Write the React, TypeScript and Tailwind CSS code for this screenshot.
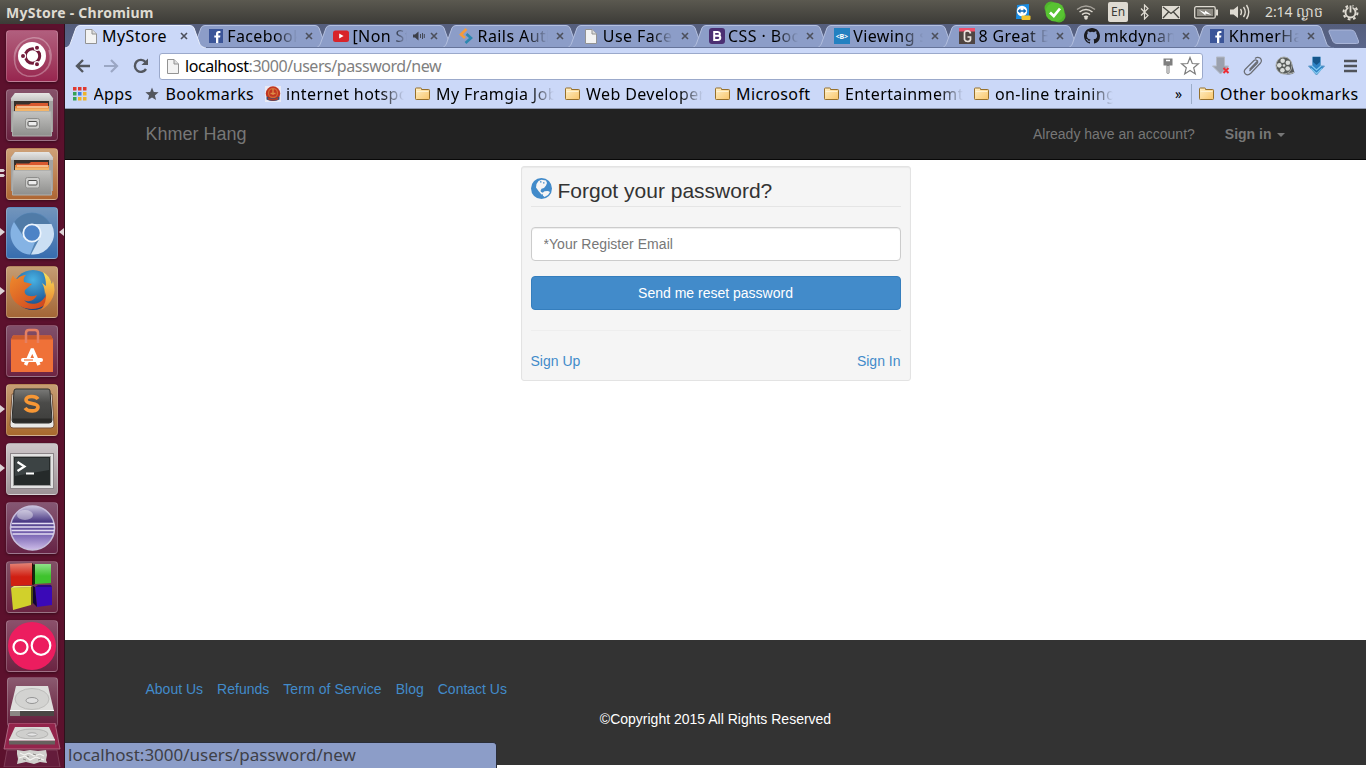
import React from "react";

const UI = "font-['Noto_Sans',sans-serif]";
const FADE = "[mask-image:linear-gradient(to_right,#000_68%,transparent)]";

/* ---------- small icons ---------- */

const PageIcon = () => (
  <svg width="16" height="16" viewBox="0 0 16 16">
    <path d="M2.500 1.500H9L13.500 6v9.500h-11z" fill="#f3f3f3" stroke="#939393" />
    <path d="M9 1.500V6h4.500" fill="#ddd" stroke="#939393" />
  </svg>
);
const FacebookIcon = () => (
  <svg width="16" height="16" viewBox="0 0 16 16">
    <rect x="1" y="1" width="14" height="14" fill="#3b5598" />
    <path d="M8 15V9.600H6.300V7.400H8V5.800C8 4 9 3 10.700 3h1.700v2.100h-1.100c-.8 0-1 .4-1 1v1.300h2.100l-.3 2.200h-1.800V15z" fill="#fff" />
  </svg>
);
const YoutubeIcon = () => (
  <svg width="16" height="16" viewBox="0 0 16 16">
    <rect x="0" y="2.500" width="16" height="11.500" rx="2.500" fill="#d8242a" />
    <path d="M6.200 5.600v5l4.400-2.500z" fill="#fff" />
  </svg>
);
const RailsIcon = () => (
  <svg width="16" height="16" viewBox="0 0 16 16" fill="none" strokeWidth="2.600">
    <path d="M8.500 1 3 6.500 7 10" stroke="#f49b3c" />
    <path d="M8.500 6l4.500 4-5.500 5" stroke="#2b87b0" />
  </svg>
);
const BootIcon = () => (
  <svg width="16" height="16" viewBox="0 0 16 16">
    <rect width="16" height="16" rx="3" fill="#4b2f72" />
    <path d="M5.200 4h3.600c2.600 0 2.800 3.200.8 3.800 2.600.6 2.100 4.200-.8 4.200H5.200zM5.200 7.800h4" fill="none" stroke="#fff" strokeWidth="2" />
  </svg>
);
const ViewIcon = () => (
  <span className={`flex size-4 items-center justify-center bg-[#2381c1] text-[7px] leading-none font-bold tracking-[-0.3px] text-white ${UI}`}>&lt;B&gt;</span>
);
const GIcon = () => (
  <svg width="16" height="16" viewBox="0 0 16 16">
    <rect width="16" height="16" fill="#4f4542" />
    <rect width="16" height="3.500" fill="#f0506c" />
    <path d="M11.500 5.500C11 2.500 6.500 2 5.500 4.500v7c1 2.800 5.500 2.500 6 0V9H8.500" fill="none" stroke="#e9e2dc" strokeWidth="1.700" />
  </svg>
);
const GithubIcon = () => (
  <svg width="16" height="16" viewBox="0 0 16 16">
    <path fill="#1b1b1f" d="M8 0C3.580 0 0 3.580 0 8c0 3.540 2.290 6.530 5.470 7.590.4.070.550-.170.550-.380 0-.190-.010-.820-.010-1.490-2.010.370-2.530-.490-2.690-.940-.090-.230-.480-.940-.820-1.130-.280-.150-.680-.520-.010-.530.630-.010 1.080.580 1.230.820.720 1.210 1.870.870 2.330.660.070-.520.280-.870.510-1.070-1.780-.2-3.640-.890-3.640-3.950 0-.870.310-1.590.820-2.150-.080-.2-.360-1.020.080-2.120 0 0 .670-.210 2.200.820a7.500 7.500 0 0 1 4 0c1.530-1.040 2.200-.820 2.200-.820.440 1.100.160 1.920.080 2.120.510.560.820 1.270.820 2.150 0 3.070-1.870 3.750-3.650 3.950.290.250.540.730.540 1.480 0 1.070-.010 1.930-.010 2.200 0 .210.150.460.550.380A8 8 0 0 0 16 8c0-4.420-3.580-8-8-8z" />
  </svg>
);
const CloseIcon = () => (
  <svg width="8" height="8" viewBox="0 0 8 8">
    <path d="M1 1l6 6M7 1L1 7" stroke="#4d505c" strokeWidth="1.600" />
  </svg>
);
const AudioIcon = () => (
  <svg width="12" height="12" viewBox="0 0 12 12" className="shrink-0">
    <path d="M0 4.500h2L5.500 1.500v9L2 7.500H0z" fill="#3c3f48" />
    <path d="M7.500 4v4M9.500 3v6M11.300 4v4" stroke="#3c3f48" strokeWidth=".9" />
  </svg>
);
const Folder = () => (
  <svg width="16" height="16" viewBox="0 0 16 16">
    <defs>
      <linearGradient id="fold" x1="0" y1="0" x2="1" y2="1">
        <stop offset="0" stopColor="#fff0c8" />
        <stop offset="1" stopColor="#f9c66b" />
      </linearGradient>
    </defs>
    <path d="M.5 4V2.800q0-.8.8-.8h4.400q.8 0 .8.8v.7h7.200q.8 0 .8.800v8.400q0 .8-.8.800H1.300q-.8 0-.8-.8z" fill="url(#fold)" stroke="#96702c" />
    <path d="M1.500 5.500h12" stroke="#fff6dc" strokeWidth=".8" />
  </svg>
);
const AppsIcon = () => (
  <svg width="14" height="14" viewBox="0 0 14 14">
    {["#e0392f", "#e0392f", "#e0392f", "#35a254", "#3f7de0", "#eeb32b", "#35a254", "#eeb32b", "#eeb32b"].map((c, i) => (
      <rect key={i} x={(i % 3) * 5} y={Math.floor(i / 3) * 5} width="3.500" height="3.500" fill={c} />
    ))}
  </svg>
);
const StarSolid = () => (
  <svg width="14" height="14" viewBox="0 0 14 14">
    <path d="M7 .5l1.800 4.500 4.800.3-3.700 3.100 1.200 4.700L7 10.500l-4.100 2.600 1.200-4.700L.4 5.300l4.800-.3z" fill="#53565e" />
  </svg>
);
const HotspotIcon = () => (
  <svg width="16" height="16" viewBox="0 0 16 16">
    <rect width="16" height="16" fill="#e9e9f3" />
    <circle cx="8" cy="7.500" r="7.200" fill="#c03521" />
    <circle cx="8" cy="7" r="4.500" fill="none" stroke="#d36c35" strokeWidth="1.300" />
    <path d="M8 3v6M5.500 7.500h5" stroke="#dd8b46" strokeWidth="1.300" />
    <path d="M1.500 10.500q6.500 3.500 13 0v3q-6.500 3-13 0z" fill="#3b4d75" />
    <path d="M3 11.500q5 2.500 10 0v2q-5 2-10 0z" fill="#b43a24" />
  </svg>
);

/* ---------- title bar ---------- */

const TitleBar = () => (
  <header className={`flex h-6 shrink-0 items-center justify-between bg-linear-to-b from-[#5b5950] to-[#3c3b37] pr-[7px] pl-[6px] text-[#dfdbd2] ${UI}`}>
    <h1 className="text-[14px] font-bold tracking-[0.25px]">MyStore - Chromium</h1>
    <div className="flex h-6 items-center">
      <svg width="16" height="17" viewBox="0 0 16 17" className="mr-[13px]">
        <path d="M2 1l12-1v15H1z" fill="#1a8de4" />
        <circle cx="7" cy="7" r="5.200" fill="#fff" />
        <path d="M2.500 7 5.500 4.500v1.700h3V4.500L11.500 7 8.500 9.500V7.800h-3v1.700z" fill="#0b68b9" />
        <rect x="6.500" y="11.500" width="9" height="4.500" rx="1" fill="#f2c52f" />
      </svg>
      <svg width="22" height="22" viewBox="0 0 22 22" className="mr-[10px]">
        <circle cx="7" cy="7" r="6.500" fill="#50b52c" />
        <circle cx="15" cy="15" r="6.500" fill="#50b52c" />
        <circle cx="11" cy="11" r="9.500" fill="#58c332" />
        <path d="M6 11.500l3.800 3.600L16 7.500" stroke="#fff" strokeWidth="2.700" fill="none" />
      </svg>
      <svg width="20" height="16" viewBox="0 0 20 16" fill="none" stroke="currentColor" strokeWidth="1.500" className="mr-3">
        <path d="M1 5.500Q10-1.500 19 5.500" opacity=".6" />
        <path d="M3.500 8Q10 3 16.500 8M6 10.700q4-3.200 8 0M8 13q2-1.600 4 0" />
        <circle cx="10" cy="14" r="1" fill="currentColor" />
      </svg>
      <span className="mr-3 flex h-5 w-5 items-center justify-center rounded-[2px] bg-[#dfdbd2] text-[12px] text-[#3c3b37]">En</span>
      <svg width="9" height="16" viewBox="0 0 9 16" fill="none" stroke="currentColor" strokeWidth="1.200" className="mr-[13px]">
        <path d="M1 4.500l7 7L4.500 15V1L8 4.500l-7 7" />
      </svg>
      <svg width="18" height="13" viewBox="0 0 18 13" className="mr-[14px]">
        <rect width="18" height="13" fill="#dfdbd2" />
        <path d="M1 1l8 6.500L17 1M1 12l5.500-6M17 12l-5.500-6" stroke="#474640" fill="none" strokeWidth="1.300" />
      </svg>
      <svg width="24" height="13" viewBox="0 0 24 13" className="mr-[12px]">
        <rect x=".7" y=".7" width="20.500" height="11.500" rx="1.500" fill="none" stroke="#dfdbd2" strokeWidth="1.300" />
        <rect x="22" y="3.500" width="2" height="6" fill="#dfdbd2" />
        <rect x="3" y="3" width="16" height="7" fill="#8f8c84" />
        <path d="M5 4l6 2.500V4.500L17.500 9l-6-1.500v2z" fill="#fff" />
      </svg>
      <svg width="20" height="16" viewBox="0 0 20 16" className="mr-[15px]">
        <path d="M0 5.500h3.500L8 2v12l-4.500-3.500H0z" fill="#dfdbd2" />
        <path d="M10.500 5q2 3 0 6M13.500 3q3.500 5 0 10M16.500 1q4.500 7 0 14" fill="none" stroke="#dfdbd2" strokeWidth="1.400" />
      </svg>
      <span className="mr-[13px] flex w-[64px] items-center gap-[4px] whitespace-nowrap">
        <span className="text-[14px] leading-6 tracking-[-0.1px]">2:14</span>
        <span className="text-[14px] leading-6 tracking-[0.6px]">ល្ងាច</span>
      </span>
      <svg width="17" height="17" viewBox="0 0 17 17" fill="none" stroke="currentColor">
        <circle cx="8.500" cy="8.500" r="5" strokeWidth="1.900" />
        <circle cx="8.500" cy="8.500" r="7" strokeWidth="2" strokeDasharray="2.750 2.750" />
        <path d="M8.500 0v9" strokeWidth="4" stroke="#4b4a43" />
        <path d="M8.500 1.500v7" strokeWidth="1.800" />
      </svg>
    </div>
  </header>
);

/* ---------- launcher ---------- */

const Tile = ({ bg, children, left = 0, right = false }: { bg: string; children: React.ReactNode; left?: number; right?: boolean }) => (
  <div className={`relative flex size-[52px] shrink-0 items-center justify-center rounded-[4px] border border-white/20 shadow-[0_1px_3px_rgba(0,0,0,0.4)] ${bg}`}>
    {children}
    {left === 1 && (
      <svg width="5" height="8" viewBox="0 0 5 8" className="absolute top-[20px] -left-[7px]"><path d="M0 0l5 4-5 4z" fill="#ddd3d6" /></svg>
    )}
    {left === 2 && (
      <svg width="5" height="8" viewBox="0 0 5 8" className="absolute top-[20px] -left-[7px]"><path d="M0 0h3.500L5 1.500 3.500 3H0zM0 5h3.500L5 6.500 3.500 8H0z" fill="#ddd3d6" /></svg>
    )}
    {right && (
      <svg width="5" height="8" viewBox="0 0 5 8" className="absolute top-[20px] -right-[7px]"><path d="M5 0L0 4l5 4z" fill="#ddd3d6" /></svg>
    )}
  </div>
);

const FilesIcon = () => (
  <svg width="50" height="50" viewBox="0 0 50 50">
    <defs>
      <linearGradient id="cab" x1="0" y1="0" x2="0" y2="1">
        <stop offset="0" stopColor="#c3c3c1" />
        <stop offset="1" stopColor="#8e8e8c" />
      </linearGradient>
      <linearGradient id="cabTop" x1="0" y1="0" x2="0" y2="1">
        <stop offset="0" stopColor="#e6e6e4" />
        <stop offset="1" stopColor="#c4c4c2" />
      </linearGradient>
    </defs>
    <path d="M8 3h34l4 5v34H4V8z" fill="#a3a3a1" />
    <path d="M8 3h34l4 5.500V11H4V8.500z" fill="url(#cabTop)" />
    <rect x="7" y="11" width="35" height="12" fill="#37302c" />
    <path d="M9 14.500h13l2-1.500h17v10H9z" fill="#d9592f" />
    <path d="M8 16h34v6H8z" fill="#eb8b40" />
    <path d="M8 18.500h34v4H8z" fill="#f2b469" />
    <path d="M10 17h31" stroke="#fff0dd" />
    <path d="M6 21.500h38l.5 24.500h-39z" fill="url(#cab)" stroke="#b0b0ae" />
    <rect x="18.500" y="28.500" width="14" height="10.500" rx="2" fill="#cececc" stroke="#8d8d8b" />
    <rect x="21" y="31.500" width="9" height="4.500" rx="1" fill="#ececec" stroke="#4f4f4d" />
  </svg>
);

const DriveIcon = ({ h }: { h: number }) => (
  <svg width="48" height={h} viewBox="0 0 48 36" preserveAspectRatio="none">
    <path d="M8 2h32l6 25H2z" fill="#dededc" />
    <ellipse cx="24" cy="15" rx="17" ry="10.500" fill="#d3d3d1" stroke="#bdbdbb" />
    <ellipse cx="24" cy="16.500" rx="6" ry="3" fill="#dedede" stroke="#959595" />
    <path d="M2 27h44v5H2z" fill="#8b8784" />
    <path d="M12 27h34v5H12z" fill="#4b4745" />
    <path d="M2 26.500h44" stroke="#fff" />
  </svg>
);

const Launcher = () => (
  <aside className="flex w-[65px] shrink-0 flex-col items-start gap-[7px] overflow-hidden border-r border-[#2f101c] bg-[#5c112d] pt-[6px] pl-[6px]">
    <Tile bg="bg-linear-to-b from-[#b15f7e] to-[#97254f]">
      <svg width="50" height="50" viewBox="0 0 50 50">
        <path d="M8 32C4 12 24 2 36 9c10 7 11 22 2 31M42 19c6 18-9 28-22 26C6 42 4 25 13 13" fill="none" stroke="#fff" opacity=".3" strokeWidth="1.500" />
        <circle cx="25" cy="25" r="14" fill="#fff" />
        <circle cx="25.500" cy="25" r="7.200" fill="none" stroke="#731c3b" strokeWidth="3" />
        <g fill="#731c3b" stroke="#fff" strokeWidth="1.200">
          <circle cx="16" cy="25" r="2.600" />
          <circle cx="30" cy="16.800" r="2.600" />
          <circle cx="30" cy="33.200" r="2.600" />
        </g>
      </svg>
    </Tile>
    <Tile bg="bg-linear-to-b from-[#86526a] to-[#68213f]"><FilesIcon /></Tile>
    <Tile bg="bg-linear-to-b from-[#cda177] to-[#ae6632]" left={2}><FilesIcon /></Tile>
    <Tile bg="bg-linear-to-b from-[#7295bc] to-[#376daf]" left={1} right>
      <svg width="50" height="50" viewBox="0 0 50 50">
        <circle cx="25" cy="25.500" r="21" fill="#5685b5" />
        <path d="M7.500 14A21 21 0 0 1 43 16H25q-8 0-10 9z" fill="#507ba7" />
        <path d="M25 16h19.500A21 21 0 0 1 24 46.500l9-17z" fill="#cbdff3" />
        <path d="M7 14l9 14q4 7 12 6l-5 12.500A21 21 0 0 1 7 14z" fill="#85b3e4" />
        <circle cx="25" cy="25" r="8.700" fill="#4d83c6" stroke="#edf5fd" strokeWidth="1.800" />
      </svg>
    </Tile>
    <Tile bg="bg-linear-to-b from-[#c59d73] to-[#a36636]" left={1}>
      <svg width="50" height="50" viewBox="0 0 50 50">
        <defs>
          <radialGradient id="ffb" cx=".5" cy=".25" r=".8"><stop offset="0" stopColor="#48b2e4" /><stop offset="1" stopColor="#103879" /></radialGradient>
          <linearGradient id="ffo" x1="0" y1="0" x2="1" y2="1"><stop offset="0" stopColor="#ef8a2c" /><stop offset="1" stopColor="#c93c1e" /></linearGradient>
          <linearGradient id="ffy" x1="0" y1="0" x2="0" y2="1"><stop offset="0" stopColor="#f9e15a" /><stop offset="1" stopColor="#e8772a" /></linearGradient>
        </defs>
        <circle cx="26" cy="23" r="20" fill="url(#ffb)" />
        <path d="M6 8c1 3 2 4 4 4 3-3 6-4 9-4-2 2-3 4-2 7l8 2-7 6c-2 5 5 8 12 5-2 5-8 8-13 5 5 6 16 5 21-3 3-5 2-10 2-14 4 3 5 8 6 10A22 21 0 0 1 3 25Q2 15 6 8z" fill="url(#ffo)" />
        <path d="M36 5q7 4 9 12l1-3q3 9 0 16-4 9-12 13 6-8 5-18l-1 4q0-8-3-13l4 3q0-8-3-14z" fill="url(#ffy)" />
      </svg>
    </Tile>
    <Tile bg="bg-linear-to-b from-[#80506a] to-[#6d2443]">
      <svg width="50" height="50" viewBox="0 0 50 50">
        <path d="M6 9.500h38l2 4V46H4V13.500z" fill="#ef7138" />
        <path d="M6 9.500h38l2 4H4z" fill="#c95a2c" />
        <path d="M19 17V7q0-3 3-3h6q3 0 3 3v10" fill="none" stroke="#e58062" strokeWidth="2.500" />
        <path d="M18.500 39l6.500-15h.500L32 39" fill="none" stroke="#fff" strokeWidth="3.500" />
        <path d="M16 34h18" stroke="#fff" strokeWidth="4" strokeLinecap="round" />
        <path d="M17 34h9" stroke="#ef7138" strokeWidth="1.200" />
      </svg>
    </Tile>
    <Tile bg="bg-linear-to-b from-[#c69d74] to-[#a86a2d]" left={1}>
      <svg width="50" height="50" viewBox="0 0 50 50">
        <defs><linearGradient id="sub" x1="0" y1="0" x2="0" y2="1"><stop offset="0" stopColor="#7a7a78" /><stop offset=".4" stopColor="#4b4b49" /><stop offset="1" stopColor="#3d3d3b" /></linearGradient></defs>
        <path d="M5 9h40l2 31q0 3-3 3H6q-3 0-3-3z" fill="#e9e9e7" stroke="#77533a" />
        <path d="M9 4h32q2 0 2 2l2 29q0 3-3 3H8q-3 0-3-3L7 6q0-2 2-2z" fill="url(#sub)" stroke="#2d2d2b" />
        <path d="M6 33.500h38v2q0 2-3 2H9q-3 0-3-2z" fill="#2a2a28" />
        <path d="M31 14c-3-4-12-3-12 1 0 5 12 2 12 7s-10 5-13 1" fill="none" stroke="#f79735" strokeWidth="3.600" />
      </svg>
    </Tile>
    <Tile bg="bg-linear-to-b from-[#cdc6c9] to-[#9d9296]" left={1}>
      <svg width="50" height="50" viewBox="0 0 50 50">
        <rect x="3.500" y="9.500" width="43" height="35" fill="#e2e2e2" stroke="#8c8589" />
        <rect x="6.500" y="12.500" width="37" height="29" fill="#252a2a" stroke="#9c9c9c" />
        <path d="M8 14h34v12L8 32z" fill="#3c4344" />
        <path d="M10.500 18l7 4.500-7 4.500M19 29.500h8" fill="none" stroke="#fff" strokeWidth="2.200" />
      </svg>
    </Tile>
    <Tile bg="bg-linear-to-b from-[#855773] to-[#662346]">
      <svg width="50" height="50" viewBox="0 0 50 50">
        <defs><linearGradient id="ecl" x1="0" y1="0" x2="0" y2="1"><stop offset="0" stopColor="#c9c3de" /><stop offset=".35" stopColor="#4c3b85" /><stop offset=".65" stopColor="#7a66b4" /><stop offset="1" stopColor="#cdbce8" /></linearGradient></defs>
        <circle cx="25.500" cy="25" r="22" fill="url(#ecl)" stroke="#c7bedc" strokeWidth="1.500" />
        <ellipse cx="18" cy="12" rx="8" ry="5" fill="#fff" opacity=".4" />
        <path d="M5 20.500h42M4 24h44M4.500 27.500h43M5.500 31h41" stroke="#e2dbf1" strokeWidth="1.400" />
      </svg>
    </Tile>
    <Tile bg="bg-linear-to-b from-[#815066] to-[#6b2442]">
      <svg width="50" height="50" viewBox="0 0 50 50">
        <defs>
          <linearGradient id="cr" x1="0" y1="0" x2="0" y2="1"><stop offset="0" stopColor="#e58476" /><stop offset=".6" stopColor="#d01f12" /></linearGradient>
          <linearGradient id="cg" x1="0" y1="0" x2="0" y2="1"><stop offset="0" stopColor="#90e08a" /><stop offset=".6" stopColor="#3fc32d" /></linearGradient>
        </defs>
        <path d="M3 2l22-1v22l-21 1z" fill="url(#cr)" /><path d="M25 1l2 2v19l-2 1z" fill="#2b0b0d" />
        <path d="M28 2h16v19l-16 1z" fill="url(#cg)" /><path d="M26 4l2-2v20l-2 1z" fill="#10300d" />
        <path d="M4 26l20-1v18L6 48z" fill="#d1d02b" /><path d="M4 26l3-2h18l-1 1z" fill="#eceb75" /><path d="M24 25l2-1v17l-2 2z" fill="#4e4b10" />
        <path d="M28 25h17v18l-15 2z" fill="#3a09b7" /><path d="M26 24l2 1 2 20-4-4z" fill="#120336" />
        <path d="M28 25l3-2h13l1 2z" fill="#2a077f" />
      </svg>
    </Tile>
    <Tile bg="bg-linear-to-b from-[#8b506b] to-[#6b2442]">
      <svg width="50" height="50" viewBox="0 0 50 50">
        <circle cx="25" cy="25" r="24" fill="#ec1d5f" />
        <circle cx="13.500" cy="26" r="7" fill="none" stroke="#fff" strokeWidth="2.200" />
        <circle cx="34" cy="24.500" r="9.300" fill="none" stroke="#fff" strokeWidth="2.200" />
      </svg>
    </Tile>
    <div className="-mt-[2px] flex h-[89px] w-[52px] shrink-0 flex-col items-center">
      <div className="flex h-[50px] w-[51px] shrink-0 items-center justify-center rounded-[4px] border border-white/20 bg-linear-to-b from-[#8b5a70] to-[#641c3b]"><DriveIcon h={36} /></div>
      <svg width="58" height="44" viewBox="0 0 58 44" className="-mt-[4px] shrink-0">
        <path d="M6 0h46l5 26H1z" fill="#93244b" stroke="#b87991" strokeWidth=".8" />
        <path d="M12 4h34l6 13H6z" fill="#d9d9d7" />
        <ellipse cx="29" cy="11" rx="16" ry="5" fill="#cfcfcd" stroke="#b5b5b3" />
        <ellipse cx="29" cy="11.500" rx="5" ry="1.700" fill="#e6e6e6" stroke="#999" strokeWidth=".8" />
        <path d="M6 17.500h46v4H6z" fill="#66615e" />
        <path d="M6 17h46" stroke="#fff" />
        <path d="M4 27h50l3 17H1z" fill="#641c3b" stroke="#874660" strokeWidth=".8" />
        <path d="M14 27l7 1 6-1 8 1 8-1 1 5-1 5 1 3-7-1-6 2-8-2-9 2 1-5-1-5z" fill="#d0cfcc" />
        <path d="M17 30l4 2 5-2 5 3 6-2 4 2M16 35l6-2 5 4 6-3 8 3" fill="none" stroke="#f5f5f2" strokeWidth="1.100" />
        <path d="M20 36l3 1M30 31l3 1M35 37l3-1M24 33l2 1" stroke="#8d8b88" />
      </svg>
    </div>
  </aside>
);

/* ---------- browser chrome ---------- */

type TabInfo = { label: string; icon: React.ReactNode; audio?: boolean };

const tabs: TabInfo[] = [
  { label: "MyStore", icon: <PageIcon /> },
  { label: "Facebook", icon: <FacebookIcon /> },
  { label: "[Non Stop", icon: <YoutubeIcon />, audio: true },
  { label: "Rails Auth", icon: <RailsIcon /> },
  { label: "Use Faceb", icon: <PageIcon /> },
  { label: "CSS · Boot", icon: <BootIcon /> },
  { label: "Viewing so", icon: <ViewIcon /> },
  { label: "8 Great Bo", icon: <GIcon /> },
  { label: "mkdynami", icon: <GithubIcon /> },
  { label: "KhmerHan", icon: <FacebookIcon /> },
];

const Tab = ({ tab, active, index }: { tab: TabInfo; active: boolean; index: number }) => (
  <div className={`relative -mr-[16.8px] flex h-6 w-[142px] shrink-0 items-center pl-[17.500px] ${active ? "z-10" : ""}`}>
    <svg width="142" height="24" viewBox="0 0 142 24" className="absolute inset-0">
      <path
        d="M0 24C4 23 5 21 6 18L11 4Q12 1.500 15 1.500H125Q128 1.500 129 4L134 18C135 21 136 23 141 24"
        fill={active ? "#cbd8f8" : "#8c9dc8"}
        stroke={active ? "#e8eefc" : "#b4c0df"}
      />
      {!active && <path d="M0 23.500H142" stroke="#66749a" />}
    </svg>
    <span className="relative flex size-4 shrink-0">{tab.icon}</span>
    <span className={`relative ml-[3.500px] shrink-0 overflow-hidden text-[16px] leading-6 tracking-[0.4px] whitespace-nowrap text-black ${tab.audio ? "w-[55px]" : "w-[70px]"} ${index === 0 ? "" : FADE}`}>
      {tab.label}
    </span>
    {tab.audio && <span className="relative ml-[6px] flex w-[9px]"><AudioIcon /></span>}
    <span className="relative ml-[8px] flex"><CloseIcon /></span>
  </div>
);

const Bookmark = ({ icon, label, box, text, fade }: { icon: React.ReactNode; label: string; box: string; text?: string; fade?: boolean }) => (
  <div className={`flex shrink-0 items-center ${box}`}>
    <span className="flex w-[21px] shrink-0">{icon}</span>
    <span className={`overflow-hidden leading-6 tracking-[0.4px] whitespace-nowrap ${text ?? ""} ${fade ? "[mask-image:linear-gradient(to_right,#000_80%,transparent)]" : ""}`}>{label}</span>
  </div>
);

const Chrome = () => (
  <div className={`shrink-0 ${UI}`}>
    <div className="flex h-6 items-start bg-linear-to-b from-[#555e7c] to-[#59658a]">
      {tabs.map((t, i) => <Tab key={t.label} tab={t} active={i === 0} index={i} />)}
      <svg width="36" height="24" viewBox="0 0 36 24" className="ml-[9px] shrink-0">
        <path d="M4 6h21q3 0 4 2.500l3.500 8.500q1 2.500-2 2.500H11q-3 0-4-2L3 8q-.5-2 1-2z" fill="#8c9dc8" stroke="#a9b5d8" />
      </svg>
    </div>
    <div className="flex h-8 items-center bg-[#cbd8f8] pt-1 pl-[10px]">
      <svg width="16" height="16" viewBox="0 0 16 16" fill="none" stroke="#53575f" strokeWidth="2.400"><path d="M15 8H2M8 2L2 8l6 6" /></svg>
      <svg width="16" height="16" viewBox="0 0 16 16" fill="none" stroke="#9ba7c4" strokeWidth="2.200" className="ml-3"><path d="M1 8h13M8 2l6 6-6 6" /></svg>
      <svg width="16" height="16" viewBox="0 0 16 16" className="ml-[14px]"><path d="M13 11A6 6 0 1 1 12.500 4" fill="none" stroke="#53575f" strokeWidth="2.400" /><path d="M15 .5V7H8.500z" fill="#53575f" /></svg>
      <div className="ml-[10px] flex h-[27px] w-[1044px] items-center rounded-[3px] border border-[#9ba9cb] bg-white pl-[5px]">
        <PageIcon />
        <span className="ml-1 text-[16px] leading-6 tracking-[-0.45px] whitespace-nowrap text-[#808080]"><span className="text-black">localhost</span>:3000/users/password/new</span>
        <svg width="12" height="16" viewBox="0 0 12 16" className="ml-auto">
          <path d="M1.500.5h9v7h-3V15l-1.500 1-1.500-1V7.500h-3z" fill="#7f7f7f" /><path d="M4 2.500h4" stroke="#fff" strokeWidth="1.500" /><path d="M6 8v7" stroke="#fff" />
        </svg>
        <svg width="20" height="20" viewBox="0 0 20 20" className="mr-[2px] ml-[6px]"><path d="M10 1.500l2.300 6 6.200.3-4.800 4 1.600 6.200-5.300-3.500L4.700 18l1.600-6.200-4.800-4 6.200-.3z" fill="#fff" stroke="#7d7d7d" strokeWidth="1.200" /></svg>
      </div>
      <svg width="20" height="20" viewBox="0 0 20 20" className="ml-[8px]">
        <path d="M5.500 1h8v9h4l-8 8-8-8h4z" fill="#9aa0ad" stroke="#b3b9c5" /><path d="M12.500 12l5 5M17.500 12l-5 5" stroke="#ed2d34" strokeWidth="2" />
      </svg>
      <svg width="20" height="20" viewBox="0 0 20 20" fill="none" stroke="#6b6e75" strokeWidth="1.200" className="ml-3">
        <path d="M6.500 13.500L15 4.500M12 2.500Q14.500.3 17 2q2.500 2.300.5 5L8 17q-3 3-5.500 1-2.500-2.500 0-5L11 4.500q1.500-1.300 3 0t0 3L6.500 15" />
      </svg>
      <svg width="20" height="20" viewBox="0 0 20 20" className="ml-3">
        <path d="M11 1.500q6 3 7 10l1.500 5q-2 2.500-7 2L9 18z" fill="#55585a" /><path d="M13 17q3 1 6-.5" stroke="#bfc2bf" fill="none" />
        <ellipse cx="9" cy="9.500" rx="8" ry="8.500" fill="#585c5a" stroke="#a9aca9" />
        {[0, 1, 2, 3, 4].map((i) => <circle key={i} cx={9 + 4.7 * Math.cos(i * 1.257 - 0.6)} cy={9.5 + 5 * Math.sin(i * 1.257 - 0.6)} r="2.300" fill="#dadddb" />)}
        <circle cx="9" cy="9.500" r="1.300" fill="#dadddb" />
      </svg>
      <svg width="20" height="20" viewBox="0 0 20 20" className="ml-3">
        <path d="M5.500 1h8v9h4l-8 9-8-9h4z" fill="#2e83c5" stroke="#639ccb" /><path d="M6 1h7v5l-3.500 3L6 6z" fill="#15568b" /><path d="M5 10l4.500 4 4.500-4M4 12.500l5.500 5 5.500-5" fill="none" stroke="#84c9f0" strokeWidth="1.100" />
      </svg>
      <svg width="14" height="14" viewBox="0 0 14 14" stroke="#50535a" strokeWidth="2.500" className="ml-[17px]"><path d="M0 2h13M0 7h13M0 12h13" /></svg>
    </div>
    <div className="flex h-[29px] items-center border-b border-[#8f98b0] bg-[#cbd8f8] pl-[7.500px] text-[16px] text-black">
      <Bookmark icon={<AppsIcon />} label="Apps" box="w-[72px]" />
      <Bookmark icon={<StarSolid />} label="Bookmarks" box="w-[120.500px]" />
      <Bookmark icon={<HotspotIcon />} label="internet hotspot" box="w-[150px]" text="w-[118px]" fade />
      <Bookmark icon={<Folder />} label="My Framgia Jobs" box="w-[150px]" text="w-[118px]" fade />
      <Bookmark icon={<Folder />} label="Web Developer" box="w-[150px]" text="w-[117px]" fade />
      <Bookmark icon={<Folder />} label="Microsoft" box="w-[109px]" />
      <Bookmark icon={<Folder />} label="Entertainmemt" box="w-[150px]" text="w-[118px]" fade />
      <Bookmark icon={<Folder />} label="on-line training" box="w-[201px]" text="w-[118px]" fade />
      <span className="w-[16px] text-[14px] leading-6">»</span>
      <span className="mr-[7px] h-5 w-px bg-[#9cadc9]" />
      <Bookmark icon={<Folder />} label="Other bookmarks" box="w-[165px]" />
    </div>
  </div>
);

/* ---------- web page ---------- */

const GlobeIcon = () => (
  <svg width="21" height="21" viewBox="0 0 21 21">
    <circle cx="10.500" cy="10.500" r="10.500" fill="#428bca" />
    <path d="M5.500 6L7.500 3l3-1.200 4.500.7 1 2.500-1 2.500-2 2.500-2.500.8-1 2 .5 1.200 1.500.5 1 1.500-2 .5-3-3.500L5 9.500z" fill="#f5f5f5" />
    <path d="M11.500 15l2-1.700 3.500-.3 2 1-2 3-3.500 2-1.500-1.500z" fill="#f5f5f5" />
    <path d="M9 3.800h1.500M12 4.800h1.500" stroke="#428bca" strokeWidth="1.200" />
  </svg>
);

const Page = () => (
  <main className="flex min-h-0 flex-1 flex-col bg-white font-['Liberation_Sans',Arial,sans-serif] text-[14px] leading-5">
    <nav className="h-[51px] shrink-0 border-b border-[#080808] bg-[#222] text-[#777]">
      <div className="mx-auto flex h-[50px] w-[1170px] items-center px-[15px]">
        <a className="text-[18px]">Khmer Hang</a>
        <span className="ml-auto">Already have an account?</span>
        <a className="mr-px ml-[30px] flex items-center font-bold">
          Sign in
          <svg width="8" height="4" viewBox="0 0 8 4" className="mt-px ml-[5px]"><path d="M0 0h8L4 4z" fill="#777" /></svg>
        </a>
      </div>
    </nav>
    <section className="h-[480px] shrink-0 pt-[6px]">
      <form className="mx-auto h-[215px] w-[390px] rounded-[3px] border border-[#e3e3e3] bg-[#f5f5f5] p-[9px] shadow-[inset_0_1px_1px_rgba(0,0,0,0.05)]">
        <h2 className="mb-5 flex h-[31px] items-start border-b border-[#e5e5e5] text-[21px] leading-[30px] text-[#333]">
          <span className="mt-[2px] mr-[6px] flex"><GlobeIcon /></span>
          Forgot your password?
        </h2>
        <input
          placeholder="*Your Register Email"
          className="mb-[15px] block h-[34px] w-full rounded-[4px] border border-[#ccc] bg-white px-3 text-[14px] tracking-[0.04px] shadow-[inset_0_1px_1px_rgba(0,0,0,0.075)] placeholder:text-[#777]"
        />
        <button type="button" className="block h-[34px] w-full rounded-[4px] border border-[#357ebd] bg-[#428bca] text-white">Send me reset password</button>
        <hr className="my-5 border-[#eee]" />
        <div className="flex justify-between text-[#428bca]">
          <a>Sign Up</a>
          <a>Sign In</a>
        </div>
      </form>
    </section>
    <footer className="h-[125px] shrink-0 bg-[#333] pt-[39px]">
      <div className="mx-auto w-[1170px] px-[15px]">
        <div className="flex gap-[14px] text-[#428bca]">
          <a>About Us</a>
          <a>Refunds</a>
          <a className="tracking-[0.08px]">Term of Service</a>
          <a>Blog</a>
          <a>Contact Us</a>
        </div>
        <p className="mt-[10px] text-center text-white">©Copyright 2015 All Rights Reserved</p>
      </div>
    </footer>
  </main>
);

export default function App() {
  return (
    <div className="flex h-screen w-full flex-col overflow-hidden">
      <TitleBar />
      <div className="flex min-h-0 flex-1">
        <Launcher />
        <div className="relative flex min-w-0 flex-1 flex-col overflow-hidden">
          <Chrome />
          <Page />
          <div className={`absolute bottom-0 left-0 h-[26px] w-[432px] rounded-tr-[4px] border-t border-r border-[#2b2e38] bg-[#8c9dc8] pl-[3px] text-[17px] leading-6 text-[#3e4047] ${UI}`}>
            localhost:3000/users/password/new
          </div>
        </div>
      </div>
    </div>
  );
}
